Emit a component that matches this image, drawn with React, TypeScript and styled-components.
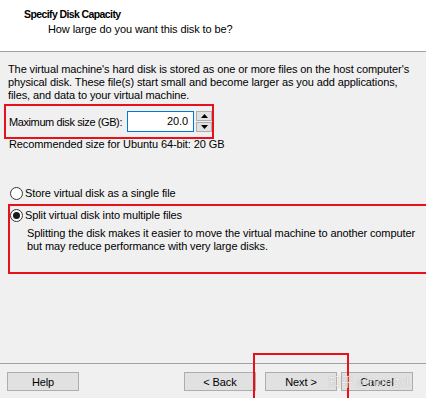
import React from "react";
import styled, { createGlobalStyle } from "styled-components";

const Global = createGlobalStyle`
  html, body { margin: 0; padding: 0; background: #f0f0f0; }
  body { font-family: "Liberation Sans", Arial, sans-serif; font-size: 11px; letter-spacing: -0.1px; color: #000; }
  * { box-sizing: border-box; }
`;

const Window = styled.div`
  position: relative;
  width: 426px;
  height: 398px;
  display: flex;
  flex-direction: column;
  background: #f0f0f0;
  overflow: hidden;
`;

const Header = styled.div`
  height: 52px;
  background: #fff;
  border-bottom: 1px solid #a0a0a0;
  padding: 7px 0 0 24px;
  flex-shrink: 0;
`;

const Title = styled.div`
  font-weight: bold;
  font-size: 10.5px;
  letter-spacing: -0.6px;
  line-height: 14px;
`;

const Subtitle = styled.div`
  margin: 1px 0 0 24px;
  line-height: 14px;
`;

const Body = styled.div`
  flex: 1;
  padding: 11px 0 0 0;
  display: flex;
  flex-direction: column;
`;

const Para = styled.p<{ $indent?: number }>`
  margin: 0;
  padding-left: ${(p) => p.$indent ?? 8}px;
  line-height: 13px;
  white-space: pre-line;
`;

const SizeRow = styled.div`
  margin: 2px 0 0 4px;
  width: 210px;
  height: 35px;
  border: 2px solid #e8101a;
  display: flex;
  align-items: center;
  padding-left: 3px;
`;

const Label = styled.span`
  width: 118px;
  flex-shrink: 0;
  white-space: nowrap;
  letter-spacing: -0.4px;
`;

const NumberInput = styled.div`
  width: 67px;
  height: 21px;
  flex-shrink: 0;
  background: #fff;
  border: 1px solid #0078d7;
  text-align: right;
  padding-right: 5px;
  line-height: 19px;
`;

const Spinner = styled.div`
  margin-left: 2px;
  display: flex;
  flex-direction: column;
  gap: 1px;
`;

const SpinBtn = styled.div`
  width: 16px;
  height: 10px;
  background: #e1e1e1;
  border: 1px solid #adadad;
  display: flex;
  align-items: center;
  justify-content: center;
`;

const Recommended = styled(Para)`
  padding-left: 9px;
  margin-top: -1px;
`;

const RadioRow = styled.label`
  display: flex;
  align-items: center;
  height: 14px;
  padding-left: 10px;
  gap: 2px;
`;

const RadioCircle = styled.span<{ $checked?: boolean }>`
  width: 13px;
  height: 13px;
  border-radius: 50%;
  border: 1px solid #333;
  background: #fff;
  display: flex;
  align-items: center;
  justify-content: center;
  &::after {
    content: "";
    display: ${(p) => (p.$checked ? "block" : "none")};
    width: 7px;
    height: 7px;
    border-radius: 50%;
    background: #1a1a1a;
  }
`;

const SplitGroup = styled.div`
  margin: 4px 0 0 8px;
  width: 430px;
  height: 70px;
  border: 2px solid #e8101a;
  padding-top: 2px;
`;

const SplitRadio = styled(RadioRow)`
  padding-left: 0;
`;

const Desc = styled(Para)`
  margin-top: 5px;
  padding-left: 17px;
`;

const Footer = styled.div`
  height: 35px;
  border-top: 1px solid #a0a0a0;
  display: flex;
  align-items: flex-start;
  padding: 8px 0 0 7px;
  flex-shrink: 0;
`;

const Button = styled.div<{ $ml?: number }>`
  margin-left: ${(p) => p.$ml ?? 0}px;
  width: 72px;
  height: 19px;
  background: #e1e1e1;
  border: 1px solid #adadad;
  display: flex;
  align-items: center;
  justify-content: center;
`;

const Highlight = styled.div`
  position: absolute;
  left: 253px;
  top: 353px;
  width: 96px;
  height: 60px;
  border: 2px solid #e8101a;
  pointer-events: none;
`;

const Watermark = styled.div`
  position: absolute;
  left: 328px;
  top: 371px;
  font-family: "Noto Sans CJK SC", "Liberation Sans", sans-serif;
  font-size: 13px;
  color: rgba(255, 255, 255, 0.8);
  text-shadow: 0 0 1px rgba(0, 0, 0, 0.3);
  white-space: nowrap;
  pointer-events: none;
`;

const Arrow = ({ up }: { up?: boolean }) => (
  <svg width="7" height="4" viewBox="0 0 7 4">
    {up ? <polygon points="0,4 7,4 3.5,0" fill="#000" /> : <polygon points="0,0 7,0 3.5,4" fill="#000" />}
  </svg>
);

export default function App() {
  return (
    <Window>
      <Global />
      <Header>
        <Title>Specify Disk Capacity</Title>
        <Subtitle>How large do you want this disk to be?</Subtitle>
      </Header>
      <Body>
        <Para>
          {"The virtual machine's hard disk is stored as one or more files on the host computer's\nphysical disk. These file(s) start small and become larger as you add applications,\nfiles, and data to your virtual machine."}
        </Para>
        <SizeRow>
          <Label>Maximum disk size (GB):</Label>
          <NumberInput>20.0</NumberInput>
          <Spinner>
            <SpinBtn><Arrow up /></SpinBtn>
            <SpinBtn><Arrow /></SpinBtn>
          </Spinner>
        </SizeRow>
        <Recommended>Recommended size for Ubuntu 64-bit: 20 GB</Recommended>
        <div style={{ height: 35 }} />
        <RadioRow>
          <RadioCircle />
          <span>Store virtual disk as a single file</span>
        </RadioRow>
        <SplitGroup>
          <SplitRadio>
            <RadioCircle $checked />
            <span>Split virtual disk into multiple files</span>
          </SplitRadio>
          <Desc>
            {"Splitting the disk makes it easier to move the virtual machine to another computer\nbut may reduce performance with very large disks."}
          </Desc>
        </SplitGroup>
      </Body>
      <Footer>
        <Button>Help</Button>
        <Button $ml={105}>&lt; Back</Button>
        <Button $ml={9}>Next &gt;</Button>
        <Button $ml={4}>Cancel</Button>
      </Footer>
      <Highlight />
      <Watermark>知乎 @nongxi</Watermark>
    </Window>
  );
}
